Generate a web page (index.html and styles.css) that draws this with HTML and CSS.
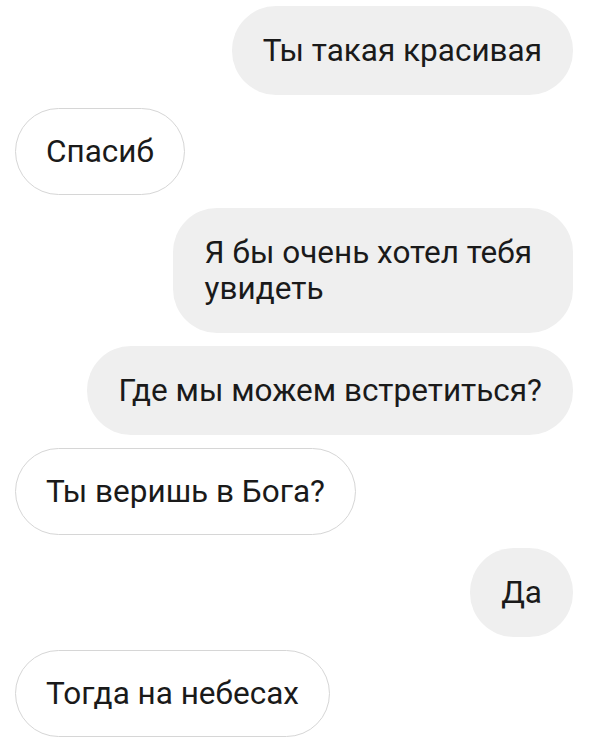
FILE: index.html
```html
<!DOCTYPE html>
<html lang="ru">
<head>
  <meta charset="UTF-8">
  <title>Чат</title>
  <link rel="stylesheet" href="styles.css">
</head>
<body>

<div class="chat">
  <div class="msg out">Ты такая красивая</div>
  <div class="msg in">Спасиб</div>
  <div class="msg out wrap">Я бы очень хотел тебя<br>увидеть</div>
  <div class="msg out">Где мы можем встретиться?</div>
  <div class="msg in">Ты веришь в Бога?</div>
  <div class="msg out">Да</div>
  <div class="msg in">Тогда на небесах</div>
</div>

</body>
</html>
```

FILE: styles.css
```css
body {
  margin: 0;
  background: #fff;
  font-family: Roboto, "Noto Sans", sans-serif;
  color: #1a1a1a;
}
.chat {
  display: flex;
  flex-direction: column;
  gap: 13px;
  padding: 6px 27px 0 15px;
}
.msg {
  font-size: 31.5px;
  line-height: 36px;
  padding: 27px 31px 26px;
  border-radius: 44px;
}
.out {
  align-self: flex-end;
  background: #efefef;
}
.wrap {
  padding-left: 32px;
  padding-right: 41px;
}
.in {
  align-self: flex-start;
  border: 1px solid #d6d6d6;
  padding: 25px 30px 24px;
}
```
